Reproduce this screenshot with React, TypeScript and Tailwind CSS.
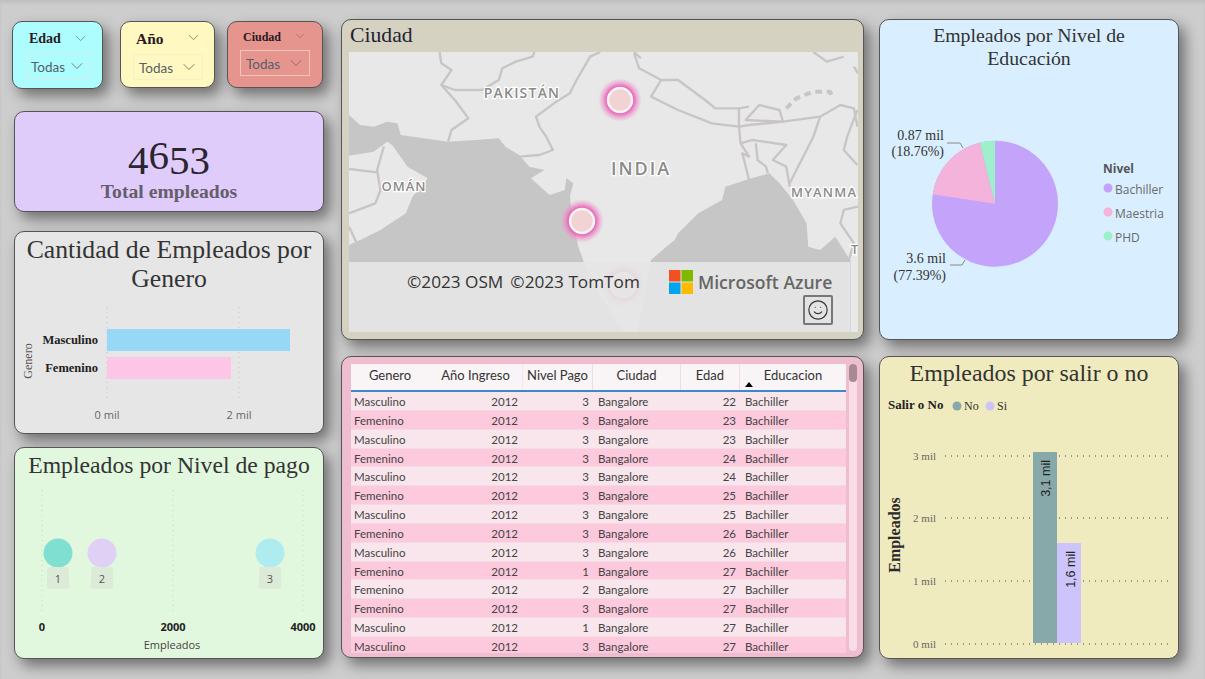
import { ChevronDown, Smile } from "lucide-react";

const serif = "font-['Liberation_Serif',serif]";
const sans = "font-['Open_Sans',sans-serif]";
const cardBase =
  "box-border border border-[#555555] rounded-[10px] shadow-[6px_7px_14px_rgba(0,0,0,0.45)]";

const rows = [
  ["Masculino", 3, 22],
  ["Femenino", 3, 23],
  ["Masculino", 3, 23],
  ["Femenino", 3, 24],
  ["Masculino", 3, 24],
  ["Femenino", 3, 25],
  ["Masculino", 3, 25],
  ["Femenino", 3, 26],
  ["Masculino", 3, 26],
  ["Femenino", 1, 27],
  ["Femenino", 2, 27],
  ["Femenino", 3, 27],
  ["Masculino", 1, 27],
  ["Masculino", 3, 27],
];

function FilterCard({
  title,
  className,
  titleClass,
  boxClass,
  chevronClass,
  smallChevron = 17,
}: {
  title: string;
  className: string;
  titleClass: string;
  boxClass: string;
  chevronClass: string;
  smallChevron?: number;
}) {
  return (
    <div className={`${cardBase} ${className}`}>
      <div className={`flex items-center justify-between ${titleClass}`}>
        <span className={`${serif} font-bold text-[#2a1a22]`}>{title}</span>
        <ChevronDown className={chevronClass} size={smallChevron} strokeWidth={1} />
      </div>
      <div className={`flex items-center justify-between border ${boxClass}`}>
        <span className="font-['Lato',sans-serif] text-[13.5px] pt-[2px] text-[#55606a]">Todas</span>
        <ChevronDown className={chevronClass} size={20} strokeWidth={1} />
      </div>
    </div>
  );
}

function Hotspot({ id, x, y }: { id: string; x: number; y: number }) {
  return (
    <g>
      <circle cx={x} cy={y} r={22} fill={`url(#${id})`} />
      <circle cx={x} cy={y} r={12} fill="#f2d3d3" stroke="#f8f4f4" strokeWidth={2.5} />
    </g>
  );
}

function MapDrawing() {
  const borders = [
    "M295,126 L300,160 L330,180 L300,225 L340,240 L420,240 L470,210 L480,175 L520,155 L570,140 L575,126",
    "M300,225 L340,270 L380,325 L330,360 L320,395",
    "M770,126 L740,140 L700,210 L680,250 L640,275 L580,320 L590,350 L610,380 L630,420 L590,435 L530,440",
    "M870,130 L885,175 L950,210 L920,260 L1000,300 L1100,340 L1180,350 L1180,295 L1210,290",
    "M950,210 L1000,210 L1080,270 L1110,295 L1180,295",
    "M1200,330 L1240,285 L1300,300 L1310,335 Z",
    "M1310,335 L1420,320 L1480,285 L1520,295 L1530,350",
    "M1180,350 L1210,345 L1310,335",
    "M1180,350 L1185,400 L1220,390 L1320,405 L1280,450 L1320,470 L1330,530",
    "M1185,400 L1210,440 L1190,430 L1210,510",
    "M1230,400 L1235,450 L1260,470 L1265,490",
    "M1530,300 L1500,380 L1490,420 L1530,465",
    "M1420,320 L1400,380 L1370,440 L1330,520",
    "M1532,590 L1490,600 L1480,640 L1520,700 L1505,750",
    "M27,477 L110,487",
    "M130,410 L110,480 L120,540 L105,580 L27,610",
    "M27,650 L50,700",
    "M1400,126 L1440,155 L1490,140",
    "M1520,170 L1532,190",
    "M870,126 L890,145",
  ];
  return (
    <svg
      className={`block w-[509px] h-[280px] ${sans}`}
      viewBox="0 0 509 280"
    >
      <defs>
        {["hot1", "hot2", "hot3"].map((id) => (
          <radialGradient key={id} id={id}>
            <stop offset="55%" stopColor="#e040a8" stopOpacity={0.95} />
            <stop offset="75%" stopColor="#ec82c4" stopOpacity={0.7} />
            <stop offset="100%" stopColor="#f0a0d0" stopOpacity={0} />
          </radialGradient>
        ))}
      </defs>
      <rect width="509" height="280" fill="#e8e8e8" />
      <g transform="scale(0.3382 0.3333) translate(-27 -126)">
        <path
          fill="#c6c6c6"
          d="M27,315 L60,345 L100,350 L140,335 L170,340 L180,375 L320,395 L400,390 L470,385 L490,410 L530,435 L560,470 L605,480 L565,505 L620,555 L665,540 L670,505 L690,520 L680,560 L690,640 L705,710 L720,752 L760,840 L838,966 L27,966 Z"
        />
        <path
          fill="#e8e8e8"
          d="M27,437 L100,425 L140,395 L155,405 L200,470 L260,505 L215,560 L195,610 L120,660 L60,690 L27,705 Z"
        />
        <path
          fill="#c6c6c6"
          d="M920,750 L960,715 L990,690 L1000,670 L1060,610 L1130,570 L1140,530 L1200,510 L1270,490 L1300,520 L1340,570 L1380,640 L1385,710 L1420,720 L1465,680 L1490,720 L1510,752 L1510,966 L880,966 L900,860 Z"
        />
        <g fill="none" stroke="#cac5c5" strokeWidth={7} strokeLinejoin="round">
          {borders.map((d) => (
            <path key={d} d={d} />
          ))}
          <path
            d="M1320,295 L1350,265 L1400,245 L1450,245 L1455,265"
            strokeWidth={12}
            strokeDasharray="20 14"
          />
        </g>
      </g>
      <g
        fill="#8a8a8a"
        stroke="#ffffff"
        strokeWidth={2.5}
        fontWeight={600}
        style={{ paintOrder: "stroke" }}
      >
        <text x={173} y={46} fontSize={14} letterSpacing={1.2} textAnchor="middle">
          PAKISTÁN
        </text>
        <text x={292} y={123} fontSize={18} letterSpacing={2} textAnchor="middle">
          INDIA
        </text>
        <text x={55} y={139} fontSize={13} letterSpacing={1} textAnchor="middle">
          OMÁN
        </text>
        <text x={442} y={145} fontSize={13} letterSpacing={1.2}>
          MYANMA
        </text>
        <text x={502} y={202} fontSize={13}>
          T
        </text>
      </g>
      <Hotspot id="hot1" x={271} y={48} />
      <Hotspot id="hot2" x={233} y={169} />
      <Hotspot id="hot3" x={274} y={233} />
    </svg>
  );
}

function GenderChart() {
  return (
    <svg className={`block ${serif}`} width={308} height={143} viewBox="15 290 308 143">
      <line x1={107} y1={307} x2={107} y2={400} stroke="#c4c4c4" strokeDasharray="1 4" />
      <line x1={239} y1={307} x2={239} y2={400} stroke="#c4c4c4" strokeDasharray="1 4" />
      <rect x={107} y={329} width={183} height={22} fill="#96d8f6" />
      <rect x={107} y={357} width={124} height={22} fill="#fdc6e6" />
      <g fontSize={12.5} fontWeight={700} fill="#222222" textAnchor="end">
        <text x={98} y={344}>
          Masculino
        </text>
        <text x={98} y={372}>
          Femenino
        </text>
      </g>
      <text
        x={0}
        y={0}
        fontSize={12}
        fill="#555555"
        textAnchor="middle"
        transform="translate(32 361) rotate(-90)"
      >
        Genero
      </text>
      <g className={sans} fontSize={11} fill="#666666" textAnchor="middle">
        <text x={107} y={419}>
          0 mil
        </text>
        <text x={239} y={419}>
          2 mil
        </text>
      </g>
    </svg>
  );
}

function PayChart() {
  const bubbles = [
    { x: 58, c: "#7fe0d2", n: "1" },
    { x: 102, c: "#e0d0f5", n: "2" },
    { x: 270, c: "#aeecf0", n: "3" },
  ];
  return (
    <svg className={`block ${sans}`} width={308} height={178} viewBox="15 480 308 178">
      {[42, 173, 303].map((x) => (
        <line key={x} x1={x} y1={490} x2={x} y2={615} stroke="#c6d4c2" strokeDasharray="1 4" />
      ))}
      {bubbles.map((b) => (
        <g key={b.n}>
          <circle cx={b.x} cy={553} r={14.5} fill={b.c} />
          <rect x={b.x - 11} y={567} width={22} height={22} rx={3} fill="#dcebd8" />
          <text x={b.x} y={583} fontSize={11} fill="#555555" textAnchor="middle">
            {b.n}
          </text>
        </g>
      ))}
      <g fontSize={11} fontWeight={700} fill="#222222" textAnchor="middle">
        <text x={42} y={631}>
          0
        </text>
        <text x={173} y={631}>
          2000
        </text>
        <text x={303} y={631}>
          4000
        </text>
      </g>
      <text x={172} y={649} fontSize={11} fill="#444444" textAnchor="middle">
        Empleados
      </text>
    </svg>
  );
}

function PieChart() {
  return (
    <svg className={`block ${serif}`} width={298} height={240} viewBox="880 90 298 240">
      <g transform="translate(0 0.7)">
        <circle cx={995} cy={203} r={63} fill="#c4a3fb" />
        <path d="M995,203 L932.7,193.6 A63,63 0 0 1 979.9,141.8 Z" fill="#f3b3da" />
        <path d="M995,203 L979.9,141.8 A63,63 0 0 1 995,140 Z" fill="#9df0cb" />
      </g>
      <path d="M947,143 L960,143 L963,148" fill="none" stroke="#888888" />
      <path d="M950,265 L962,265 L965,260" fill="none" stroke="#888888" />
      <g fontSize={14} fill="#333333" textAnchor="end">
        <text x={944} y={140}>
          0.87 mil
        </text>
        <text x={944} y={156}>
          (18.76%)
        </text>
        <text x={946} y={263}>
          3.6 mil
        </text>
        <text x={946} y={280}>
          (77.39%)
        </text>
      </g>
      <g className={sans} fontSize={12} fill="#6a6a6a">
        <text x={1103} y={173} fontWeight={700} fill="#555555">
          Nivel
        </text>
        <circle cx={1108} cy={188} r={4.5} fill="#c4a3fb" />
        <text x={1115} y={194}>
          Bachiller
        </text>
        <circle cx={1108} cy={212} r={4.5} fill="#f3b3da" />
        <text x={1115} y={218}>
          Maestria
        </text>
        <circle cx={1108} cy={236} r={4.5} fill="#9df0cb" />
        <text x={1115} y={242}>
          PHD
        </text>
      </g>
    </svg>
  );
}

function LeaveChart() {
  const ticks = [
    { y: 456, t: "3 mil" },
    { y: 518, t: "2 mil" },
    { y: 581, t: "1 mil" },
    { y: 644, t: "0 mil" },
  ];
  return (
    <svg className={`block ${serif}`} width={298} height={270} viewBox="880 389 298 270">
      <text x={888} y={409} fontSize={13} fontWeight={700} fill="#222222">
        Salir o No
      </text>
      <circle cx={957} cy={406} r={4.5} fill="#87a9aa" />
      <text x={964} y={410} fontSize={12} fill="#333333">
        No
      </text>
      <circle cx={990} cy={406} r={4.5} fill="#ccc4fa" />
      <text x={997} y={410} fontSize={12} fill="#333333">
        Si
      </text>
      <text
        fontSize={16}
        fontWeight={700}
        fill="#2a2a2a"
        textAnchor="middle"
        transform="translate(900 535) rotate(-90)"
      >
        Empleados
      </text>
      {ticks.map((t) => (
        <g key={t.t}>
          <text x={936} y={t.y + 4} fontSize={11} fill="#666666" textAnchor="end">
            {t.t}
          </text>
          <line
            x1={945}
            y1={t.y}
            x2={1168}
            y2={t.y}
            stroke="#444444"
            strokeDasharray="1 5"
          />
        </g>
      ))}
      <rect x={1033} y={452} width={24} height={191} fill="#87a9aa" />
      <rect x={1057} y={543} width={24} height={100} fill="#ccc4fa" />
      <g className="font-['Liberation_Sans',sans-serif]" fontSize={12.5} fill="#222222">
        <text textAnchor="end" transform="translate(1050 460) rotate(-90)">
          3,1 mil
        </text>
        <text textAnchor="end" transform="translate(1075 551) rotate(-90)">
          1,6 mil
        </text>
      </g>
    </svg>
  );
}

export default function App() {
  return (
    <div className="w-[1205px] h-[679px] overflow-hidden flex items-start pl-[12px] bg-[#cdcdcd] shadow-[inset_0_3px_3px_rgba(0,0,0,0.06)]">
      {/* left column */}
      <div className="w-[312px] pt-[21px] flex flex-col">
        <div className="flex items-start">
          <FilterCard
            title="Edad"
            className="w-[91px] h-[68px] bg-[#adfdff] px-[13px] pt-[5px]"
            titleClass="text-[14px] h-[22px] pl-[3px] pr-0"
            boxClass="w-[64px] h-[26px] mt-[4px] border-[#d5eef0] pl-[4px] pr-[2px]"
            chevronClass="text-[#5d6f72]"
          />
          <FilterCard
            title="Año"
            className="w-[95px] h-[67px] bg-[#fff8c0] ml-[17px] px-[12px] pt-[6px]"
            titleClass="text-[15.5px] h-[22px] pl-[3px] pr-0 [&>svg]:-mt-[4px]"
            boxClass="w-[70px] h-[26px] mt-[4px] border-[#f5f0c8] pl-[5px] pr-[3px]"
            chevronClass="text-[#666655]"
          />
          <FilterCard
            title="Ciudad"
            className="w-[96px] h-[67px] bg-[#e6948e] ml-[12px] px-[12px] pt-[4px]"
            titleClass="text-[12px] h-[22px] pl-[3px] pr-[3px] [&>svg]:-mt-[2px]"
            boxClass="w-[70px] h-[26px] mt-[2px] border-[#f2c4bf] pl-[5px] pr-[3px]"
            chevronClass="text-[#8a5f5b]"
            smallChevron={14}
          />
        </div>

        <div
          className={`${cardBase} w-[310px] h-[101px] ml-[2px] mt-[22px] bg-[#e0ccfa] flex flex-col items-center pt-[22px] ${serif}`}
        >
          <div className="text-[41px] leading-[42px] text-[#2a2530] h-[42px]">
            <span className="align-[-5px]">4</span>
            <span>6</span>
            <span className="align-[-5px]">5</span>
            <span className="align-[-5px]">3</span>
          </div>
          <div className="text-[19.7px] leading-[22px] font-bold text-[#665e6b] mt-[4px]">
            Total empleados
          </div>
        </div>

        <div className={`${cardBase} w-[310px] h-[203px] ml-[2px] mt-[19px] bg-[#e6e6e6]`}>
          <div
            className={`${serif} h-[58px] pt-[3px] text-center text-[25.7px] leading-[29px] text-[#333333]`}
          >
            Cantidad de Empleados por
            <br />
            Genero
          </div>
          <GenderChart />
        </div>

        <div className={`${cardBase} w-[310px] h-[212px] ml-[2px] mt-[13px] bg-[#e2f8de]`}>
          <div
            className={`${serif} h-[32px] pt-[2px] text-center text-[23.7px] leading-[30px] text-[#333333]`}
          >
            Empleados por Nivel de pago
          </div>
          <PayChart />
        </div>
      </div>

      {/* middle column */}
      <div className="w-[523px] ml-[17px] pt-[19px] flex flex-col">
        <div className={`${cardBase} h-[321px] bg-[#d6d2c2] px-[7px]`}>
          <div className={`${serif} h-[32px] pl-[1px] text-[21.7px] leading-[30px] text-[#222233]`}>
            Ciudad
          </div>
          <div className="relative w-[509px] h-[280px] overflow-hidden">
            <MapDrawing />
            <div className="absolute left-0 right-[8px] top-[210px] h-[70px] bg-[#e6e6e6]/90 flex flex-col">
              <div className="flex items-center pl-[58px] pt-[7px] h-[32px]">
                <span className={`${sans} text-[17.2px] leading-[24px] text-[#333333] w-[262px] whitespace-nowrap`}>
                  ©2023 OSM<span className="ml-[7px]">©2023 TomTom</span>
                </span>
                <svg width={24} height={24} viewBox="0 0 24 24" className="shrink-0">
                  <rect width={11.5} height={11.5} fill="#f25022" />
                  <rect x={12.5} width={11.5} height={11.5} fill="#7fba00" />
                  <rect y={12.5} width={11.5} height={11.5} fill="#00a4ef" />
                  <rect x={12.5} y={12.5} width={11.5} height={11.5} fill="#ffb900" />
                </svg>
                <span className={`${sans} ml-[5px] text-[17.6px] leading-[24px] font-semibold text-[#666666] whitespace-nowrap`}>
                  Microsoft Azure
                </span>
              </div>
              <div className="flex justify-end pr-[17px] pt-[1px]">
                <div className="w-[30px] h-[30px] border-2 border-[#777777] rounded-[2px] flex items-center justify-center">
                  <Smile size={22} strokeWidth={1.25} className="text-[#333333]" />
                </div>
              </div>
            </div>
          </div>
        </div>

        <div
          className={`${cardBase} h-[302px] mt-[16px] bg-[#efbdd0] pl-[9px] pt-[7px] flex items-start font-['Lato',sans-serif] text-[#444444]`}
        >
          <div className="w-[495px] h-[289px] overflow-hidden">
            <div className="grid grid-cols-[78px_94px_70px_88px_59px_106px] h-[28px] bg-[#f9f4f6] border-b-2 border-[#3f86d0] text-[13px] text-[#333333] text-center">
              <div className="pt-[2px]">Genero</div>
              <div className="pt-[2px] border-r border-[#f4e6ec]">Año Ingreso</div>
              <div className="pt-[2px] border-r border-[#f0dde5]">Nivel Pago</div>
              <div className="pt-[2px] border-r border-[#f0dde5]">Ciudad</div>
              <div className="pt-[2px] border-r border-[#f0dde5]">Edad</div>
              <div className="pt-[2px] relative">
                Educacion
                <span className="absolute left-[5px] top-[18px] w-0 h-0 border-x-[4px] border-x-transparent border-b-[5px] border-b-black" />
              </div>
            </div>
            {rows.map(([genero, nivel, edad], i) => (
              <div
                key={i}
                className={`grid grid-cols-[78px_94px_70px_88px_59px_106px] h-[18.85px] pt-[1px] items-center text-[11.5px] leading-[17px] border-b border-[#f2dbe3] ${
                  i % 2 === 0 ? "bg-[#f8e6ec]" : "bg-[#fdc9dd]"
                }`}
              >
                <div className="pl-[3px]">{genero}</div>
                <div className="text-right pr-[5px]">2012</div>
                <div className="text-right pr-[4px]">{nivel}</div>
                <div className="pl-[5px]">Bangalore</div>
                <div className="text-right pr-[4px]">{edad}</div>
                <div className="pl-[5px]">Bachiller</div>
              </div>
            ))}
          </div>
          <div className="w-[8px] h-[287px] ml-[3px] rounded-[4px] bg-[#f8dce6]">
            <div className="w-[8px] h-[18px] rounded-[4px] bg-[#a88a95]" />
          </div>
        </div>
      </div>

      {/* right column */}
      <div className="w-[300px] ml-[15px] pt-[19px] flex flex-col">
        <div className={`${cardBase} h-[321px] bg-[#d9efff]`}>
          <div
            className={`${serif} h-[70px] pt-[4px] text-center text-[19.8px] leading-[23px] text-[#333333]`}
          >
            Empleados por Nivel de
            <br />
            Educación
          </div>
          <PieChart />
        </div>
        <div className={`${cardBase} h-[303px] mt-[16px] bg-[#f0ebbf]`}>
          <div
            className={`${serif} h-[32px] pt-[1px] text-center text-[23.9px] leading-[30px] text-[#333333]`}
          >
            Empleados por salir o no
          </div>
          <LeaveChart />
        </div>
      </div>
    </div>
  );
}
